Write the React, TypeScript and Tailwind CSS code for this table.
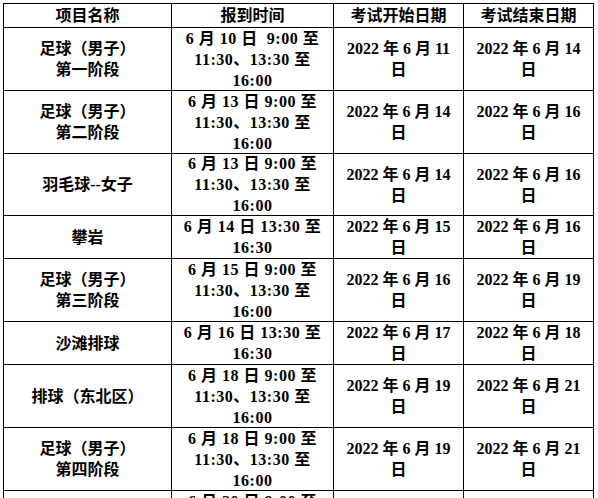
import React from 'react';

type Row = {
  name: string[];
  time: string[];
  start: string;
  end: string;
  h: string;
};

const rows: Row[] = [
  { name: ['足球（男子）', '第一阶段'], time: ['6 月 10 日  9:00 至', '11:30、13:30 至', '16:00'], start: '11', end: '14', h: 'h-[63px]' },
  { name: ['足球（男子）', '第二阶段'], time: ['6 月 13 日 9:00 至', '11:30、13:30 至', '16:00'], start: '14', end: '16', h: 'h-[63px]' },
  { name: ['羽毛球--女子'], time: ['6 月 13 日 9:00 至', '11:30、13:30 至', '16:00'], start: '14', end: '16', h: 'h-[62px]' },
  { name: ['攀岩'], time: ['6 月 14 日 13:30 至', '16:30'], start: '15', end: '16', h: 'h-[43px]' },
  { name: ['足球（男子）', '第三阶段'], time: ['6 月 15 日 9:00 至', '11:30、13:30 至', '16:00'], start: '16', end: '19', h: 'h-[63px]' },
  { name: ['沙滩排球'], time: ['6 月 16 日 13:30 至', '16:30'], start: '17', end: '18', h: 'h-[43px]' },
  { name: ['排球（东北区）'], time: ['6 月 18 日 9:00 至', '11:30、13:30 至', '16:00'], start: '19', end: '21', h: 'h-[63px]' },
  { name: ['足球（男子）', '第四阶段'], time: ['6 月 18 日 9:00 至', '11:30、13:30 至', '16:00'], start: '19', end: '21', h: 'h-[63px]' },
  { name: ['足球（男子）', '第五阶段'], time: ['6 月 20 日 9:00 至', '11:30、13:30 至', '16:00'], start: '21', end: '23', h: 'h-[63px]' },
];

const cell = 'border-r border-b border-black flex flex-col items-center justify-center text-center whitespace-pre';

const Lines = ({ lines }: { lines: string[] }) => (
  <>
    {lines.map((l, i) => (
      <div key={i}>{l}</div>
    ))}
  </>
);

const App = () => {
  return (
    <div className="min-h-screen bg-white pt-[3px] pl-[3px] text-black font-['Liberation_Serif','Noto_Sans_CJK_SC',serif] font-bold text-[16px] leading-[21px]">
      <div className="grid w-[591px] grid-cols-[168px_162px_130px_130px] border-l border-t border-black">
        <div className={`${cell} h-[24px]`}>项目名称</div>
        <div className={`${cell} h-[24px]`}>报到时间</div>
        <div className={`${cell} h-[24px]`}>考试开始日期</div>
        <div className={`${cell} h-[24px]`}>考试结束日期</div>
        {rows.map((r, i) => (
          <React.Fragment key={i}>
            <div className={`${cell} ${r.h}`}>
              <Lines lines={r.name} />
            </div>
            <div className={`${cell} ${r.h} tracking-[0.5px]`}>
              <Lines lines={r.time} />
            </div>
            <div className={`${cell} ${r.h}`}>
              <Lines lines={[`2022 年 6 月 ${r.start}`, '日']} />
            </div>
            <div className={`${cell} ${r.h}`}>
              <Lines lines={[`2022 年 6 月 ${r.end}`, '日']} />
            </div>
          </React.Fragment>
        ))}
      </div>
    </div>
  );
};

export default App;
